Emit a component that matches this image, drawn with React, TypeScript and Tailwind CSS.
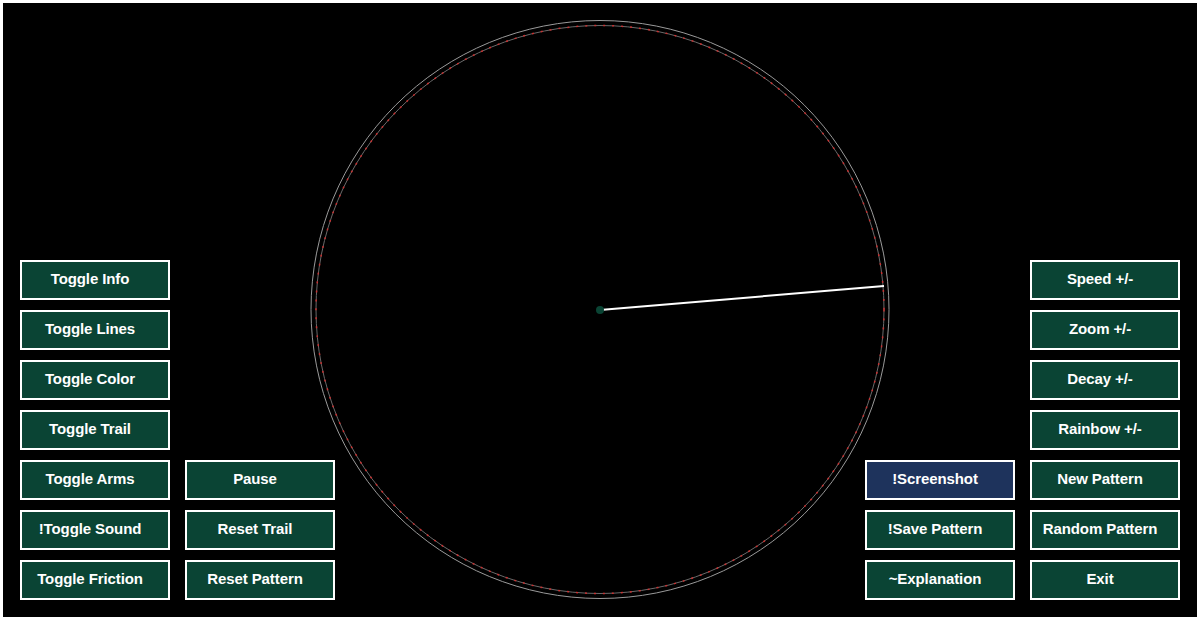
import React from 'react'

type Btn = { label: string; blue?: boolean }

const leftCol: Btn[] = [
  { label: 'Toggle Info' },
  { label: 'Toggle Lines' },
  { label: 'Toggle Color' },
  { label: 'Toggle Trail' },
  { label: 'Toggle Arms' },
  { label: '!Toggle Sound' },
  { label: 'Toggle Friction' },
]
const leftCol2: Btn[] = [{ label: 'Pause' }, { label: 'Reset Trail' }, { label: 'Reset Pattern' }]
const rightCol1: Btn[] = [{ label: '!Screenshot', blue: true }, { label: '!Save Pattern' }, { label: '~Explanation' }]
const rightCol2: Btn[] = [
  { label: 'Speed +/-' },
  { label: 'Zoom +/-' },
  { label: 'Decay +/-' },
  { label: 'Rainbow +/-' },
  { label: 'New Pattern' },
  { label: 'Random Pattern' },
  { label: 'Exit' },
]

const Button = ({ label, blue }: Btn) => (
  <button
    className={
      'w-[150px] h-[40px] border-2 border-white flex items-center justify-center pr-[10px] pb-[2px] text-white font-bold text-[15px] tracking-[-0.1px] ' +
      (blue ? 'bg-[#1e335c]' : 'bg-[#0a4434]')
    }
  >
    {label}
  </button>
)

const Column = ({ items }: { items: Btn[] }) => (
  <div className="flex flex-col gap-[10px]">
    {items.map((b) => (
      <Button key={b.label} {...b} />
    ))}
  </div>
)

const App = () => {
  return (
    <div className="w-[1200px] h-[620px] bg-white p-[3px]" style={{ fontFamily: '"Liberation Sans", Arial, sans-serif' }}>
      <div className="relative w-full h-full bg-black overflow-hidden">
        {/* pendulum canvas */}
        <svg className="absolute inset-0" width="1194" height="614" viewBox="0 0 1194 614">
          <circle cx="597" cy="306.5" r="289" fill="none" stroke="#9a9a9a" strokeWidth="1" />
          <circle cx="597" cy="306.5" r="284" fill="none" stroke="#6a6a6a" strokeWidth="1" />
          <circle cx="597" cy="306.5" r="284" fill="none" stroke="#c83232" strokeWidth="1.5" strokeDasharray="2 7" />
          <line x1="597" y1="307" x2="881" y2="283" stroke="#ffffff" strokeWidth="2" />
          <circle cx="597" cy="307" r="4" fill="#0a4434" />
        </svg>

        <div className="relative h-full flex justify-between items-end p-[17px]">
          <div className="flex items-end gap-[15px]">
            <Column items={leftCol} />
            <Column items={leftCol2} />
          </div>
          <div className="flex items-end gap-[15px]">
            <Column items={rightCol1} />
            <Column items={rightCol2} />
          </div>
        </div>
      </div>
    </div>
  )
}

export default App
